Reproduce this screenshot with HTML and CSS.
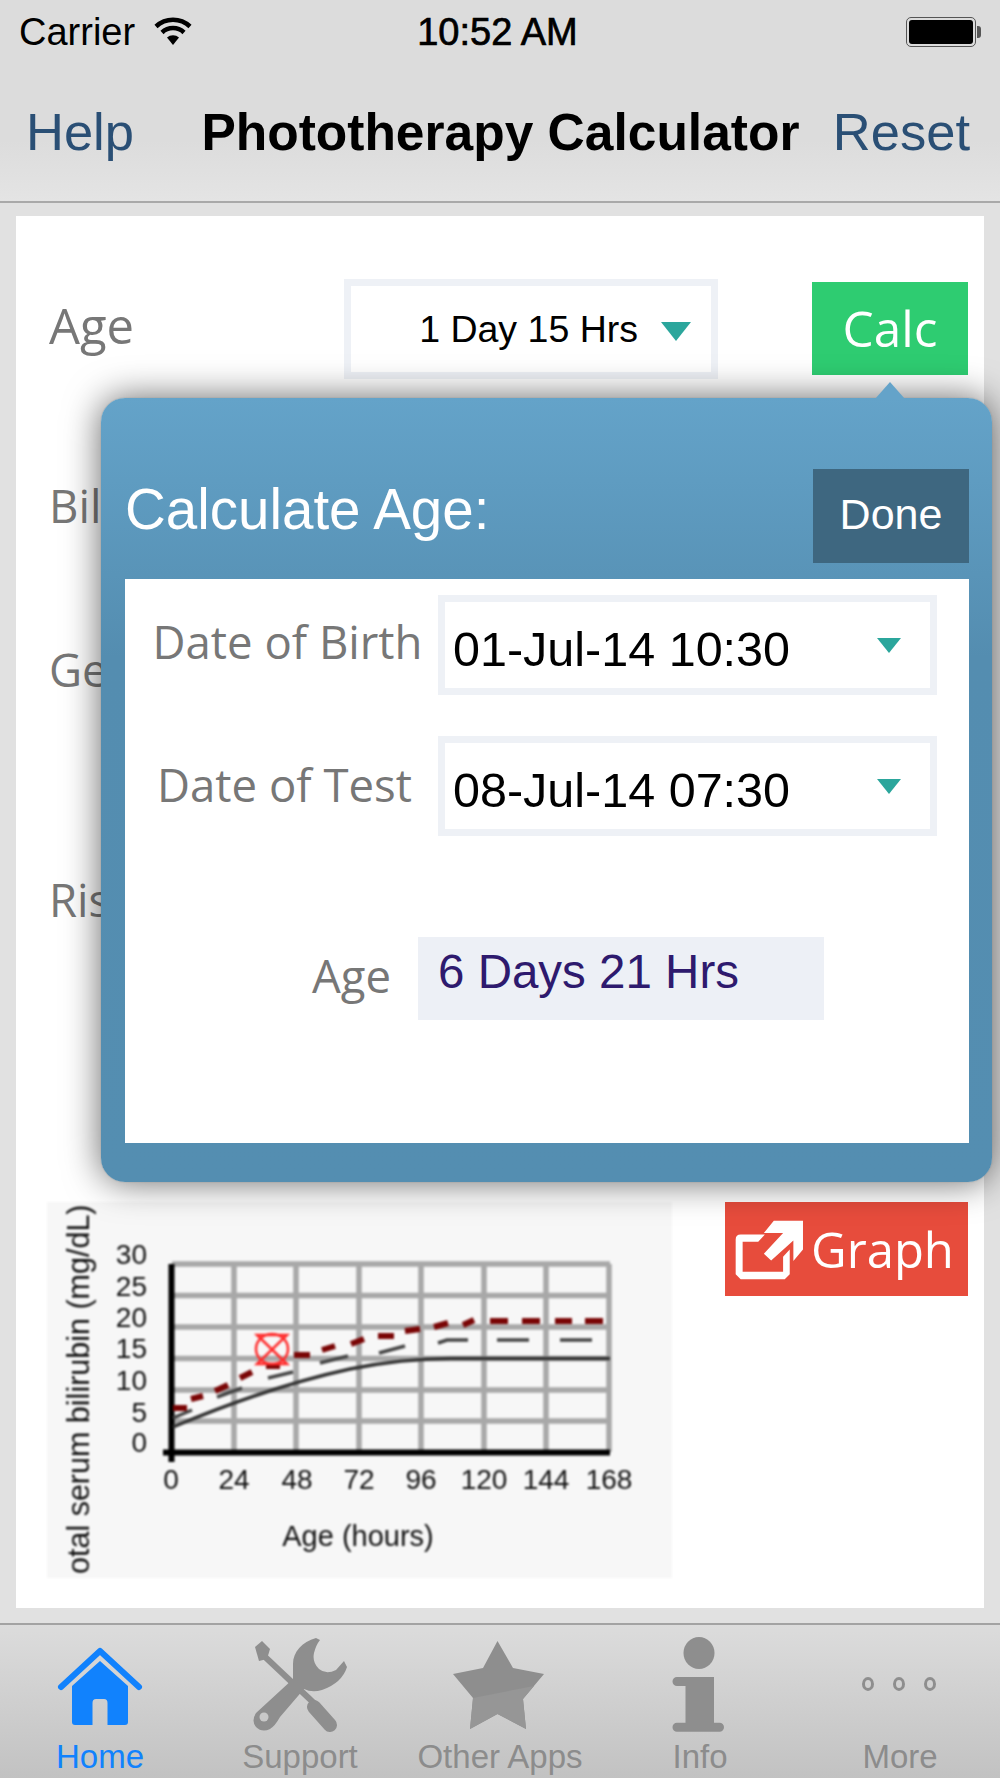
FILE: index.html
```html
<!DOCTYPE html>
<html lang="en">
<head>
<meta charset="utf-8">
<title>Phototherapy Calculator</title>
<link rel="stylesheet" href="styles.css">
</head>
<body>
<header class="top">
  <div class="status">
    <div class="status-left">
      <span>Carrier</span>
      <svg class="wifi" viewBox="0 0 38 28"><path class="wifi-arc" d="M2 9.5A25 25 0 0 1 36 9.5"/><path class="wifi-arc" d="M8 15.5A16 16 0 0 1 30 15.5"/><path class="wifi-fill" d="M13 20.500A9 9 0 0 1 25 20.500L19 28Z"/></svg>
    </div>
    <span class="time">10:52 AM</span>
    <div class="battery"><span class="battery-fill"></span></div>
  </div>
  <nav class="nav">
    <span class="nav-link">Help</span>
    <span class="nav-title">Phototherapy Calculator</span>
    <span class="nav-link">Reset</span>
  </nav>
</header>

<main class="main">
  <section class="card">
    <div class="row row-age">
      <span class="label">Age</span>
      <div class="select select-age"><span>1 Day 15 Hrs</span><i class="caret"></i></div>
      <button class="btn btn-calc">Calc</button>
    </div>
    <div class="row row-bil"><span class="label">Bil</span></div>
    <div class="row row-ge"><span class="label">Ge</span></div>
    <div class="row row-ris"><span class="label">Ris</span></div>

    <div class="chart-row">
      <svg class="chart" viewBox="47 1202 625 376">
        <g class="grid">
          <path d="M234 1264V1452M296 1264V1452M359 1264V1452M421 1264V1452M484 1264V1452M546 1264V1452M609 1264V1452"/>
          <path d="M172 1264H610M172 1295.500H610M172 1327H610M172 1358.500H610M172 1390H610M172 1421H610"/>
        </g>
        <path class="axis" d="M171.500 1264V1462M163 1452.500H610"/>
        <path class="solid" d="M173 1427C230 1403 290 1382 350 1369C385 1362 420 1358.500 451 1358.500H610"/>
        <path class="mid" d="M173 1418L192 1410M217 1397L242 1388M268 1378L293 1372M320 1363L348 1356M379 1353L405 1346M438 1343L447 1340H468M497 1340H529M560 1340H592"/>
        <path class="red" d="M173 1408H187M191 1399L203 1396M215 1391L228 1385M240 1378L252 1372M266 1366H280M294 1355H310M322 1350L335 1346M351 1344L364 1339M378 1336H394M405 1331L420 1329M434 1327L448 1323M463 1325L474 1320M490 1321H508M522 1321H540M555 1321H572M585 1321H603"/>
        <g class="marker">
          <ellipse cx="272" cy="1349" rx="16" ry="15"/>
          <path d="M257 1335H287L257 1364H287ZM257 1335L287 1364"/>
        </g>
        <g class="ticks ticks-y">
          <text x="147" y="1264">30</text>
          <text x="147" y="1296">25</text>
          <text x="147" y="1327">20</text>
          <text x="147" y="1358">15</text>
          <text x="147" y="1390">10</text>
          <text x="147" y="1422">5</text>
          <text x="147" y="1452">0</text>
        </g>
        <g class="ticks ticks-x">
          <text x="171" y="1489">0</text>
          <text x="234" y="1489">24</text>
          <text x="297" y="1489">48</text>
          <text x="359" y="1489">72</text>
          <text x="421" y="1489">96</text>
          <text x="484" y="1489">120</text>
          <text x="546" y="1489">144</text>
          <text x="609" y="1489">168</text>
        </g>
        <text class="ticks-x" x="358" y="1546">Age (hours)</text>
        <text class="axis-title" transform="translate(89 1574) rotate(-90)">otal serum bilirubin (mg/dL)</text>
      </svg>
      <button class="btn btn-graph">
        <svg class="graph-icon" viewBox="100 110 215 190"><path d="M195 160H122Q107 160 107 175V280L122 295H255L270 280V205L250 227V272H128V182H175Z"/><path d="M222 118H310V205L281 240V178L214 238L192 218L250 155H192Z"/></svg>
        <span>Graph</span>
      </button>
    </div>

    <div class="popover">
      <div class="pop-head">
        <span class="pop-title">Calculate Age:</span>
        <button class="btn btn-done">Done</button>
      </div>
      <div class="panel">
        <div class="pop-row">
          <span class="label pop-label">Date of Birth</span>
          <div class="select select-date"><span>01-Jul-14 10:30</span><i class="caret caret-small"></i></div>
        </div>
        <div class="pop-row">
          <span class="label pop-label pop-label-test">Date of Test</span>
          <div class="select select-date"><span>08-Jul-14 07:30</span><i class="caret caret-small"></i></div>
        </div>
        <div class="age-result">
          <span class="label">Age</span>
          <div class="age-value">6 Days 21 Hrs</div>
        </div>
      </div>
    </div>
  </section>
</main>

<footer class="tabs">
  <div class="tab tab-active">
    <svg class="tab-icon" viewBox="0 0 100 96"><path class="home-roof" d="M11 50L50 14L89 50"/><path d="M50 24L22 49V85Q22 88 25 88H42.500V66Q42.500 62 46 62H54Q57.500 62 57.500 66V88H75Q78 88 78 85V49Z"/></svg>
    <span>Home</span>
  </div>
  <div class="tab">
    <svg class="tab-icon" viewBox="0 0 100 96"><path d="M66 1C52 5 43 15 43 27V42L6 76Q1 84 6 90Q12 96 20 92Q25 89 30 80L54 52Q62 56 72 53Q92 46 97 30L94 24L86 33Q76 38 69 32Q62 25 64 16Q66 8 70 3Z"/><path class="tool-shaft" d="M12 17L66 68"/><path class="tool-handle" d="M64 70L80 88"/><path d="M5 10L12 4L20 12L17 22L9 24Z"/><circle class="tool-hole" cx="14" cy="80" r="4.500"/></svg>
    <span>Support</span>
  </div>
  <div class="tab">
    <svg class="tab-icon" viewBox="0 0 100 96"><path d="M47.500 4L63 31L94 37L73 62L76 92L47.500 77L20 92L23 61L3 37L33 31Z"/><path class="star-light" d="M23 61L84 49L73 62L76 92L47.500 77L20 92Z"/></svg>
    <span>Other Apps</span>
  </div>
  <div class="tab">
    <svg class="tab-icon" viewBox="0 0 100 96"><ellipse cx="49" cy="16" rx="15.500" ry="16"/><path d="M27 40H64V85.700H69.500A4.500 4.500 0 0 1 69.500 94.700H27A4.500 4.500 0 0 1 27 85.700H35.500V49H27A4.500 4.500 0 0 1 27 40Z"/></svg>
    <span>Info</span>
  </div>
  <div class="tab">
    <svg class="tab-icon tab-dots" viewBox="0 0 100 96"><ellipse cx="18" cy="47" rx="4.500" ry="5.500"/><ellipse cx="49" cy="47" rx="4.500" ry="5.500"/><ellipse cx="80" cy="47" rx="4.500" ry="5.500"/></svg>
    <span>More</span>
  </div>
</footer>
</body>
</html>
```
FILE: styles.css
```css
* { box-sizing: border-box; }
html, body { margin: 0; padding: 0; }
body {
  width: 1000px;
  height: 1778px;
  display: flex;
  flex-direction: column;
  background: #e1e1e1;
  font-family: "Liberation Sans", Arial, sans-serif;
  color: #000;
  overflow: hidden;
}

/* top bars */
.top {
  height: 203px;
  flex: none;
  background: linear-gradient(#dcdcdc 70%, #e4e4e4);
  border-bottom: 2px solid #a9a9a9;
}
.status {
  height: 64px;
  display: grid;
  grid-template-columns: 1fr auto 1fr;
  align-items: center;
  padding: 0 24px 0 19px;
  font-size: 38px;
}
.status-left { display: flex; align-items: center; gap: 19px; }
.wifi { width: 38px; height: 28px; margin-top: -2px; }
.wifi-arc { fill: none; stroke: #000; stroke-width: 4.5; }
.wifi-fill { fill: #000; }
.time { -webkit-text-stroke: 0.7px #000; }
.battery {
  justify-self: end;
  width: 70px;
  height: 30px;
  position: relative;
  border: 1px solid #555;
  border-radius: 5px;
  padding: 2px;
}
.battery::after {
  content: "";
  position: absolute;
  right: -6px;
  top: 8px;
  width: 4px;
  height: 12px;
  background: #555;
  border-radius: 0 3px 3px 0;
}
.battery-fill { display: block; height: 100%; width: 64px; background: #000; border-radius: 3px; }
.nav {
  height: 137px;
  display: flex;
  align-items: center;
  justify-content: space-between;
  padding: 0 30px 2px 26px;
  font-size: 52.5px;
}
.nav-link { color: #2a4f75; }
.nav-title { font-weight: 700; font-size: 51.5px; margin-left: 34px; }

/* main card */
.main { flex: 1; padding: 13px 16px 15px; display: flex; }
.card {
  position: relative;
  flex: 1;
  background: #fff;
  display: flex;
  flex-direction: column;
}
.row { display: flex; align-items: center; height: 100px; padding-left: 33px; }
.row-age { margin-top: 63px; justify-content: space-between; padding-right: 16px; }
.row-bil { margin-top: 76px; }
.row-ge { margin-top: 64px; }
.row-ris { margin-top: 130px; }
.label {
  font-family: "Open Sans", "Liberation Sans", sans-serif;
  font-size: 45.5px;
  color: #777;
  white-space: nowrap;
}
.row-age .label { width: 295px; font-size: 49px; margin-top: -8px; }
.select {
  display: flex;
  align-items: center;
  height: 100px;
  border: 7px solid #eef1f6;
  background: #fff;
}
.select-age {
  width: 374px;
  justify-content: flex-end;
  gap: 23px;
  padding-right: 20px;
  font-size: 37.5px;
}
.select-age span { padding-top: 1px; }
.row-age .select { margin-right: auto; }
.caret {
  width: 0;
  height: 0;
  border-left: 15px solid transparent;
  border-right: 15px solid transparent;
  border-top: 19px solid #2ba69c;
  margin-top: 4px;
}
.caret-small { border-left-width: 12px; border-right-width: 12px; border-top-width: 15px; margin-top: 1px; }
.btn {
  border: 0;
  padding: 0;
  color: #fff;
  font-family: "Open Sans", "Liberation Sans", sans-serif;
}
.btn-calc { width: 156px; height: 93px; background: #2ecc71; font-size: 49.5px; margin-top: -2px; }

/* chart row */
.chart-row {
  margin-top: auto;
  padding: 0 16px 30px 31px;
  display: flex;
  align-items: flex-start;
  justify-content: space-between;
}
.chart { width: 625px; height: 376px; display: block; background: #f7f7f7; filter: blur(0.8px); }
.grid path { fill: none; stroke: #a8a8a8; stroke-width: 5.5; }
.axis { fill: none; stroke: #000; stroke-width: 6; }
.solid { fill: none; stroke: #333; stroke-width: 3.5; }
.mid { fill: none; stroke: #444; stroke-width: 3.5; }
.red { fill: none; stroke: #7a0505; stroke-width: 6; }
.marker ellipse, .marker path { fill: none; stroke: #ff2b2b; stroke-width: 2.5; }
.ticks text, .ticks-x, .axis-title {
  font-family: "Liberation Sans", Arial, sans-serif;
  font-size: 28px;
  fill: #111;
}
.ticks-y text { text-anchor: end; }
.ticks-x text, text.ticks-x { text-anchor: middle; }
text.ticks-x { font-size: 29px; }
.axis-title { font-size: 30.500px; }
.btn-graph {
  width: 243px;
  height: 94px;
  background: #e74c3c;
  font-size: 49px;
  display: flex;
  align-items: center;
  gap: 6px;
  padding-left: 8px;
}
.graph-icon { width: 72px; height: 63px; fill: #fff; flex: none; }

/* popover */
.popover {
  position: absolute;
  left: 85px;
  top: 182px;
  width: 891px;
  height: 784px;
  padding: 71px 23px 39px 24px;
  display: flex;
  flex-direction: column;
  border-radius: 24px;
  background: linear-gradient(#64a3c9, #548db0 33%, #548eb1);
  box-shadow: 0 0 1px 0 #777, 0 0 36px rgba(0, 0, 0, .6);
}
.popover::before {
  content: "";
  position: absolute;
  left: 774px;
  top: -16px;
  width: 0;
  height: 0;
  border-left: 15px solid transparent;
  border-right: 15px solid transparent;
  border-bottom: 17px solid #64a3c9;
}
.pop-head { display: flex; align-items: center; justify-content: space-between; height: 94px; }
.pop-title { color: #fff; font-size: 56.5px; margin-top: -14px; }
.btn-done {
  width: 156px;
  height: 94px;
  background: #3e6780;
  font-family: "Liberation Sans", Arial, sans-serif;
  font-size: 43px;
  padding-bottom: 4px;
}
.panel {
  flex: 1;
  margin-top: 16px;
  background: #fff;
  padding: 16px 32px 0 0;
  display: flex;
  flex-direction: column;
  gap: 41px;
}
.pop-row { display: grid; grid-template-columns: 313px 499px; align-items: center; }
.pop-label { text-align: center; padding-left: 12px; margin-top: -8px; }
.pop-label-test { padding-left: 6px; margin-top: -4px; }
.select-date {
  justify-content: space-between;
  padding: 0 29px 0 8px;
  font-size: 48.5px;
}
.select-date span { padding-top: 8px; }
.age-result {
  display: flex;
  align-items: center;
  gap: 27px;
  margin-top: 60px;
  padding-left: 187px;
}
.age-result .label { margin-top: -8px; }
.age-value {
  width: 406px;
  height: 83px;
  padding: 6px 0 0 20px;
  background: #edf0f6;
  color: #2e1a6e;
  font-size: 47.500px;
  line-height: 58px;
}

/* tab bar */
.tabs {
  flex: none;
  height: 155px;
  display: flex;
  background: linear-gradient(#dcdcdc, #c2c2c2);
  border-top: 2px solid #a3a3a3;
}
.tab {
  flex: 1;
  display: flex;
  flex-direction: column;
  align-items: center;
  padding-top: 12px;
  font-size: 33px;
  line-height: 36px;
  color: #8c8c8c;
}
.tab-icon { width: 100px; height: 96px; fill: #8e8e8e; margin-bottom: 6px; flex: none; }
.tab-active { color: #1182fd; }
.tab-active .tab-icon { fill: #1182fd; }
.home-roof { fill: none; stroke: #1182fd; stroke-width: 6; stroke-linecap: round; stroke-linejoin: round; }
.tool-shaft { fill: none; stroke: #8e8e8e; stroke-width: 6; }
.tool-handle { fill: none; stroke: #8e8e8e; stroke-width: 14; stroke-linecap: round; }
.tool-hole { fill: #c8c8c8; }
.star-light { fill: #969696; }
.tab-dots { fill: none; stroke: #8e8e8e; stroke-width: 3; }
```
